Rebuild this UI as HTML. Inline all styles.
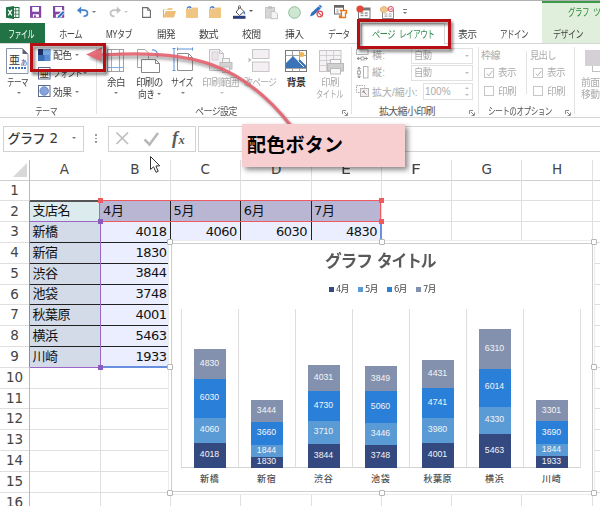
<!DOCTYPE html>
<html lang="ja">
<head>
<meta charset="utf-8">
<title>配色ボタン</title>
<style>
html,body{margin:0;padding:0;}
body{width:600px;height:506px;overflow:hidden;background:#fff;position:relative;font-family:"Liberation Sans","Noto Sans CJK JP",sans-serif;color:#444;}
.a{position:absolute;white-space:nowrap;}
.vl{position:absolute;width:1px;background:#dfdfdf;}
.hl{position:absolute;height:1px;background:#dfdfdf;}
.sep{position:absolute;width:1px;background:#e3e3e3;top:47px;height:67px;}
.hd{position:absolute;width:6px;height:6px;border:1px solid #b5b5b5;background:#fff;box-sizing:border-box;border-radius:1px;}
.cb{position:absolute;width:10px;height:10px;border:1px solid #c6c6c6;background:#fff;box-sizing:border-box;}
.dd{position:absolute;box-sizing:border-box;border:1px solid #e1e1e1;background:#fff;}
.ar{position:absolute;width:0;height:0;border-left:2.2px solid transparent;border-right:2.2px solid transparent;border-top:2.6px solid #777;}
svg{position:absolute;overflow:visible;}
</style>
</head>
<body>
<div class="a" style="left:542px;top:0px;width:58px;height:44px;background:#e0efdc;"></div><div class="a" style="left:542px;top:0px;width:58px;height:3px;background:#3c9a46;"></div><div class="a" style="left:567.5px;top:6.0px;font-size:10px;line-height:13px;color:#2d8a3a;letter-spacing:-0.70px;transform:scaleX(0.752);transform-origin:0 0;">グラフ</div><div class="a" style="left:593.0px;top:6.0px;font-size:10px;line-height:13px;color:#2d8a3a;letter-spacing:-0.70px;transform:scaleX(0.804);transform-origin:0 0;">ツール</div><div class="a" style="left:0px;top:0px;width:600px;height:1px;background:#b0b0b0;"></div><svg style="left:5.5px;top:5.5px" width="14" height="13" viewBox="0 0 14 13"><rect x="6" y="1.5" width="7" height="10" fill="#fff" stroke="#1f7244" stroke-width="1"/><path d="M6 4.8H13M6 8.2H13M9.7 1.5V11.5" stroke="#1f7244" stroke-width=".8"/><path d="M0 1.3L8 0V13L0 11.7Z" fill="#1f7244"/><path d="M2.2 3.8L5.8 9.4M5.8 3.8L2.2 9.4" stroke="#fff" stroke-width="1.3"/></svg><svg style="left:30px;top:6px" width="11.2" height="11.8" viewBox="0 0 11.2 11.8"><rect x="0" y="0" width="11.2" height="11.8" fill="#8246a8"/><rect x="2.2" y="1" width="6.8" height="4.7" fill="#fff"/><rect x="2.9" y="8.3" width="6" height="2.9" fill="#fff"/><rect x="4" y="9.3" width="1.9" height="1.9" fill="#8246a8"/></svg><svg style="left:53px;top:6px" width="12" height="12.5" viewBox="0 0 12 12.5"><rect x="0" y="0" width="11.2" height="11.8" fill="#8246a8"/><rect x="2.2" y="1" width="6.8" height="4.7" fill="#fff"/><rect x="2.9" y="8.3" width="6" height="2.9" fill="#fff"/><path d="M3.2 13L4.2 9.4L9.8 3.8L12.4 6.4L6.8 12Z" fill="#fff"/><path d="M4.2 12.3L5 10L10 5L11.5 6.5L6.5 11.5Z" fill="#2f6fbf"/></svg><svg style="left:76.5px;top:6px" width="12" height="11" viewBox="0 0 12 11"><path d="M1 4.2H6.5C9.5 4.2 10.5 6 10.5 7.3C10.5 9 9 10.3 6.5 10.3" fill="none" stroke="#4683cf" stroke-width="1.7"/><path d="M0 4.2L4.2 .5V7.9Z" fill="#4683cf"/></svg><div class="ar" style="left:92.3px;top:10.7px;border-top-color:#777;"></div><svg style="left:109px;top:6px" width="12" height="11" viewBox="0 0 12 11"><path d="M11 4.2H5.5C2.5 4.2 1.5 6 1.5 7.3C1.5 9 3 10.3 5.5 10.3" fill="none" stroke="#c2c2c2" stroke-width="1.8"/><path d="M12 4.2L7.8 .5V7.9Z" fill="#c2c2c2"/></svg><div class="ar" style="left:123.8px;top:10.7px;border-top-color:#c8c8c8;"></div><svg style="left:141.5px;top:6.5px" width="9" height="11" viewBox="0 0 9 11"><path d="M.6 .6H5.6L8.4 3.4V10.4H.6Z" fill="#fff" stroke="#6e6e6e" stroke-width="1.1"/><path d="M5.6 .6V3.4H8.4" fill="none" stroke="#6e6e6e" stroke-width=".9"/></svg><svg style="left:162.5px;top:6.5px" width="13" height="11" viewBox="0 0 13 11"><path d="M.5 10.5V2.5H4L5 1H9.5V3H.5" fill="#f1cd94"/><path d="M.5 10.5L2.5 4H13L11 10.5Z" fill="#edbf78"/><path d="M.5 10.5V2.5" stroke="#e3ad5a" stroke-width="1"/></svg><svg style="left:186px;top:5.5px" width="12" height="12" viewBox="0 0 12 12"><path d="M0 12V3H5L6 1.5H12V12Z" fill="#efc583"/><path d="M1 2.5C2 .5 3.5 .5 4.5 1.2" fill="none" stroke="#3a6fc0" stroke-width="1.2"/><path d="M3.5 0L5.8 1.4L3.6 2.8Z" fill="#3a6fc0"/></svg><svg style="left:209px;top:5.5px" width="12" height="12" viewBox="0 0 12 12"><path d="M0 12V3H5L6 1.5H12V12Z" fill="#efc583"/><path d="M1 2.5C2 .5 3.5 .5 4.5 1.2" fill="none" stroke="#3a6fc0" stroke-width="1.2"/><path d="M3.5 0L5.8 1.4L3.6 2.8Z" fill="#3a6fc0"/></svg><svg style="left:232.5px;top:4.5px" width="13" height="14" viewBox="0 0 13 14"><path d="M3 7L7 2.5L11 6.5L6.5 10.5Z" fill="#fff" stroke="#555" stroke-width="1"/><path d="M5.5 4V1.5C5.5 .5 7.5 .5 7.5 1.5V3" fill="none" stroke="#555" stroke-width=".9"/><path d="M11 6C12.5 7.5 12.5 9 11.5 9.5C10.5 9 10.3 7.5 11 6Z" fill="#3a7bd0"/><rect x="0" y="10.8" width="12.5" height="3" fill="#2b3f7e"/></svg><div class="ar" style="left:248.8px;top:10.2px;border-top-color:#555;"></div><svg style="left:265px;top:5.5px" width="13" height="13" viewBox="0 0 13 13"><rect x=".5" y="1.5" width="9" height="10.5" fill="#d6d6d6" stroke="#c6c6c6"/><rect x="3" y=".3" width="4" height="2.4" fill="#bdbdbd"/><path d="M6 5.5H10L12.5 8V12.7H6Z" fill="#f4f4f4" stroke="#bdbdbd" stroke-width=".9"/></svg><svg style="left:287.5px;top:5.5px" width="13" height="13" viewBox="0 0 13 13"><circle cx="6.5" cy="6.5" r="5.8" fill="#cfe6d2" stroke="#8cbf98" stroke-width="1"/></svg><svg style="left:309px;top:5px" width="15" height="13" viewBox="0 0 15 13"><path d="M1 11.5L2.2 8L9.5 1.2L11.8 3.4L4.5 10.3Z" fill="#2f6fc0"/><path d="M9.8 .8L11 -.2L13 1.8L12 2.9Z" fill="#2f6fc0"/><circle cx="10.8" cy="9" r="2.8" fill="#fff" stroke="#e0474c" stroke-width="1.2"/><path d="M8.9 7.2L12.7 10.8" stroke="#e0474c" stroke-width="1.1"/></svg><svg style="left:333.5px;top:4.5px" width="14" height="14" viewBox="0 0 14 14"><rect x=".5" y=".5" width="9" height="8.5" fill="#fff" stroke="#666" stroke-width="1"/><rect x=".5" y=".5" width="9" height="2.2" fill="#666"/><path d="M2.5 5H4.5M2.5 7H4.5" stroke="#888" stroke-width="1"/><path d="M6.5 5.5H12.5V8H11.5V12.5H5.5V11H7.5V7.5Z" fill="#fff" stroke="#e8761c" stroke-width="1.3"/></svg><svg style="left:356px;top:4.5px" width="15" height="14" viewBox="0 0 15 14"><rect x="2.5" y="3" width="11.5" height="10.5" fill="#fff" stroke="#777" stroke-width="1"/><rect x="2.5" y="3" width="11.5" height="2.4" fill="#777"/><path d="M4.5 8H12M4.5 10.5H12" stroke="#999" stroke-width="1.3" stroke-dasharray="3 1.2"/><circle cx="4" cy="4" r="3.6" fill="#e04838"/></svg><svg style="left:379.5px;top:4.5px" width="15" height="14" viewBox="0 0 15 14"><rect x="2.5" y="4" width="11" height="9.5" fill="#fff" stroke="#888" stroke-width="1"/><path d="M4.5 9H12M4.5 11.2H12" stroke="#aaa" stroke-width="1.2" stroke-dasharray="3 1.2"/><path d="M.5 3L4 1L7.5 3V6L4 8L.5 6Z" fill="#edc58d" stroke="#d9a45e" stroke-width=".6"/><circle cx="10.8" cy="4" r="2.6" fill="#fbe4e6" stroke="#e0536a" stroke-width="1"/><path d="M9.7 4L10.6 5L12 3" stroke="#e0536a" stroke-width=".8" fill="none"/></svg><div class="a" style="left:402.8px;top:9.3px;width:4.6px;height:1px;background:#777;"></div><div class="ar" style="left:402.8px;top:11.7px;border-top-color:#777;"></div>
<div class="a" style="left:0px;top:22.5px;width:45px;height:20.5px;background:#217346;"></div><div class="a" style="left:7.5px;top:26.6px;font-size:10.5px;line-height:14px;color:#fff;letter-spacing:-0.74px;transform:scaleX(0.666);transform-origin:0 0;">ファイル</div><div class="a" style="left:59.0px;top:26.6px;font-size:10.5px;line-height:14px;color:#444;letter-spacing:-0.74px;transform:scaleX(0.791);transform-origin:0 0;">ホーム</div><div class="a" style="left:106.0px;top:26.6px;font-size:10.5px;line-height:14px;color:#444;letter-spacing:-0.74px;transform:scaleX(0.767);transform-origin:0 0;">MYタブ</div><div class="a" style="left:157.0px;top:26.6px;font-size:10.5px;line-height:14px;color:#444;letter-spacing:-0.74px;transform:scaleX(0.913);transform-origin:0 0;">開発</div><div class="a" style="left:199.0px;top:26.6px;font-size:10.5px;line-height:14px;color:#444;letter-spacing:-0.74px;transform:scaleX(0.962);transform-origin:0 0;">数式</div><div class="a" style="left:241.5px;top:26.6px;font-size:10.5px;line-height:14px;color:#444;letter-spacing:-0.74px;transform:scaleX(0.938);transform-origin:0 0;">校閲</div><div class="a" style="left:285.0px;top:26.6px;font-size:10.5px;line-height:14px;color:#444;letter-spacing:-0.74px;transform:scaleX(0.938);transform-origin:0 0;">挿入</div><div class="a" style="left:327.5px;top:26.6px;font-size:10.5px;line-height:14px;color:#444;letter-spacing:-0.74px;transform:scaleX(0.733);transform-origin:0 0;">データ</div><div class="hl" style="left:0;top:43px;width:600px;background:#d6d6d6;"></div><div class="a" style="left:361px;top:23px;width:84px;height:21px;background:#fff;border:1px solid #d6d6d6;border-bottom:none;box-sizing:border-box;"></div><div class="a" style="left:371.6px;top:26.6px;font-size:10.5px;line-height:14px;color:#2d8a4e;letter-spacing:-0.74px;transform:scaleX(0.785);transform-origin:0 0;">ページ</div><div class="a" style="left:399.0px;top:26.6px;font-size:10.5px;line-height:14px;color:#2d8a4e;letter-spacing:-0.74px;transform:scaleX(0.726);transform-origin:0 0;">レイアウト</div><div class="a" style="left:457.5px;top:26.6px;font-size:10.5px;line-height:14px;color:#444;letter-spacing:-0.74px;transform:scaleX(0.938);transform-origin:0 0;">表示</div><div class="a" style="left:500.0px;top:26.6px;font-size:10.5px;line-height:14px;color:#444;letter-spacing:-0.74px;transform:scaleX(0.716);transform-origin:0 0;">アドイン</div><div class="a" style="left:552.5px;top:26.6px;font-size:10.5px;line-height:14px;color:#444;letter-spacing:-0.74px;transform:scaleX(0.766);transform-origin:0 0;">デザイン</div>
<svg style="left:6.2px;top:47.5px" width="22.5" height="26" viewBox="0 0 22.5 26"><path d="M.5 .5H16.5L22 6V25.5H.5Z" fill="#fff" stroke="#8a94a8" stroke-width="1"/><path d="M16.5 .5V6H22Z" fill="#5a6378"/><text x="3" y="16.3" font-size="11" font-family="Liberation Sans,Noto Sans CJK JP,sans-serif" fill="#333">亜</text><text x="13.6" y="16.8" font-size="8.5" font-family="Liberation Sans,Noto Sans CJK JP,sans-serif" fill="#3a62b0">ぁ</text><path d="M3 20H21" stroke="#3f74c4" stroke-width="1.8" stroke-dasharray="2 1"/></svg><div class="a" style="left:7.0px;top:76.3px;font-size:10px;line-height:13px;color:#444;letter-spacing:-0.70px;transform:scaleX(0.752);transform-origin:0 0;">テーマ</div><div class="ar" style="left:17.3px;top:91.7px;border-top-color:#808080;"></div><svg style="left:37.5px;top:48.5px" width="12.5" height="12" viewBox="0 0 12.5 12"><rect x="0" y="0" width="12.5" height="12" fill="#5b8fd3"/><rect x="5" y="0" width="7.5" height="6" fill="#74a6df"/><rect x="0" y="6" width="6.5" height="6" fill="#3a6db8"/><rect x="0" y="0" width="5" height="6" fill="#1f2f63"/></svg><div class="a" style="left:52.5px;top:48.5px;font-size:10px;line-height:13px;color:#444;letter-spacing:-0.70px;transform:scaleX(0.984);transform-origin:0 0;">配色</div><div class="ar" style="left:74.8px;top:53.7px;border-top-color:#808080;"></div><svg style="left:37.5px;top:66.5px" width="12.5" height="12.5" viewBox="0 0 12.5 12.5"><rect x=".5" y=".5" width="11.5" height="11.5" fill="#fff" stroke="#5c6b8a" stroke-width="1"/><text x="1.6" y="10.3" font-size="9.5" font-family="Liberation Sans,Noto Sans CJK JP,sans-serif" fill="#333">亜</text></svg><div class="a" style="left:52.5px;top:67.2px;font-size:10px;line-height:13px;color:#444;letter-spacing:-0.70px;transform:scaleX(0.778);transform-origin:0 0;">フォント</div><div class="ar" style="left:83.3px;top:72.2px;border-top-color:#808080;"></div><svg style="left:37.5px;top:84.5px" width="12.5" height="12" viewBox="0 0 12.5 12"><rect x=".5" y=".5" width="11.5" height="11" fill="#fff" stroke="#5c6b8a" stroke-width="1"/><circle cx="6.2" cy="6" r="4.3" fill="#86a3dc" stroke="#5f7fc4" stroke-width=".8"/></svg><div class="a" style="left:52.5px;top:85.5px;font-size:10px;line-height:13px;color:#444;letter-spacing:-0.70px;transform:scaleX(0.984);transform-origin:0 0;">効果</div><div class="ar" style="left:74.8px;top:90.7px;border-top-color:#808080;"></div><div class="a" style="left:35.0px;top:104.5px;font-size:10px;line-height:13px;color:#555;letter-spacing:-0.70px;transform:scaleX(0.787);transform-origin:0 0;">テーマ</div><div class="sep" style="left:95.5px;"></div><svg style="left:106.5px;top:48.5px" width="17" height="23" viewBox="0 0 17 23"><rect x=".5" y=".5" width="16" height="22" fill="#fff" stroke="#a2a2a2" stroke-width="1"/><path d="M4.5 .5V22.5M12.5 .5V22.5M.5 4.5H16.5M.5 18.5H16.5" stroke="#78a5df" stroke-width=".9"/></svg><div class="a" style="left:106.5px;top:75.5px;font-size:10px;line-height:13px;color:#444;letter-spacing:-0.70px;transform:scaleX(0.959);transform-origin:0 0;">余白</div><div class="ar" style="left:114.1px;top:91.7px;border-top-color:#808080;"></div><svg style="left:137px;top:47.5px" width="24" height="25" viewBox="0 0 24 25"><path d="M.5 1.5H8L11.5 5V19.5H.5Z" fill="#fff" stroke="#a5a5a5" stroke-width="1"/><path d="M4.5 11.5H18.5L22.5 15.5V24.5H4.5Z" fill="#fff" stroke="#858585" stroke-width="1"/><path d="M18.5 11.5V15.5H22.5" fill="none" stroke="#858585" stroke-width="1"/><path d="M15 2C18.5 1.5 21 4 20.5 8" fill="none" stroke="#5b92da" stroke-width="1.2"/><path d="M18.3 6.5L20.6 9.5L22.6 6.2Z" fill="#5b92da"/></svg><div class="a" style="left:135.8px;top:75.5px;font-size:10px;line-height:13px;color:#444;letter-spacing:-0.70px;transform:scaleX(0.951);transform-origin:0 0;">印刷の</div><div class="a" style="left:137.5px;top:87.5px;font-size:10px;line-height:13px;color:#444;letter-spacing:-0.70px;transform:scaleX(0.881);transform-origin:0 0;">向き</div><div class="ar" style="left:157.10000000000002px;top:92.7px;border-top-color:#808080;"></div><svg style="left:172px;top:47px" width="22" height="25" viewBox="0 0 22 25"><path d="M5.5 6.5H16.5L20.5 10.5V23.5H5.5Z" fill="#fff" stroke="#8f8f8f" stroke-width="1"/><path d="M16.5 6.5V10.5H20.5" fill="none" stroke="#8f8f8f" stroke-width="1"/><path d="M2 1.5V23.5M.5 1.5H3.5M.5 23.5H3.5M5.5 2H20.5M5.5 .5V3.5M20.5 .5V3.5" stroke="#5b92da" stroke-width="1"/></svg><div class="a" style="left:171.0px;top:75.5px;font-size:10px;line-height:13px;color:#444;letter-spacing:-0.70px;transform:scaleX(0.795);transform-origin:0 0;">サイズ</div><div class="ar" style="left:181.10000000000002px;top:91.7px;border-top-color:#808080;"></div><svg style="left:209px;top:49px" width="24" height="25" viewBox="0 0 24 25"><path d="M.5 .5H10.5L14.5 4.5V21.5H.5Z" fill="#f4eff3" stroke="#c2c2c2" stroke-width="1"/><path d="M10.5 .5V4.5H14.5" fill="none" stroke="#c2c2c2"/><rect x="3" y="3" width="6" height="8" fill="#ebe3ea" stroke="#cfcfcf" stroke-width=".8"/><rect x="13.5" y="9.5" width="7" height="5" fill="#f6f6f6" stroke="#bcbcbc"/><rect x="11" y="13.5" width="12" height="6.5" fill="#d2d2d2" stroke="#bcbcbc"/><rect x="13.5" y="18" width="7" height="5.5" fill="#f6f6f6" stroke="#bcbcbc"/></svg><div class="a" style="left:201.5px;top:75.5px;font-size:10px;line-height:13px;color:#ababab;letter-spacing:-0.70px;transform:scaleX(0.989);transform-origin:0 0;">印刷範囲</div><div class="ar" style="left:220.3px;top:91.7px;border-top-color:#c4c4c4;"></div><svg style="left:247.5px;top:49px" width="22" height="23" viewBox="0 0 22 23"><rect x="4.5" y=".5" width="16.5" height="9" fill="#f4eff3" stroke="#c6c6c6"/><rect x="4.5" y="13" width="16.5" height="9.5" fill="#f4eff3" stroke="#c6c6c6"/><path d="M.5 8.5L3.5 11L.5 13.5Z" fill="#bdbdbd"/></svg><div class="a" style="left:243.5px;top:75.5px;font-size:10px;line-height:13px;color:#ababab;letter-spacing:-0.70px;transform:scaleX(0.875);transform-origin:0 0;">改ページ</div><svg style="left:285px;top:49.5px" width="22" height="22" viewBox="0 0 22 22"><rect x=".5" y=".5" width="21" height="21" fill="#fff" stroke="#777" stroke-width="1"/><path d="M.5 5.5H21.5M7.5 .5V21.5M14.5 .5V21.5M.5 18.5H21.5" stroke="#9a9a9a" stroke-width=".9"/><path d="M1 18V13L8 6L13 11L15 9.5L21 15.5V18Z" fill="#3b73b9"/><path d="M13 11L19 17" stroke="#fff" stroke-width=".9"/><circle cx="16.8" cy="4.6" r="2.5" fill="#f2b450"/></svg><div class="a" style="left:286.5px;top:75.5px;font-size:10px;line-height:13px;color:#333;letter-spacing:-0.50px;font-weight:700;">背景</div><svg style="left:318.5px;top:49.5px" width="26" height="25" viewBox="0 0 26 25"><rect x=".5" y=".5" width="21.5" height="21" fill="#f6f1f5" stroke="#c6c6c6"/><path d="M.5 5.5H22M.5 10.5H22M.5 15.5H22M7.5 .5V21.5M14.5 .5V21.5" stroke="#cdcdcd" stroke-width=".9"/><rect x="11.5" y="9.5" width="10" height="6" fill="#f8f8f8" stroke="#bcbcbc"/><rect x="8.5" y="13.5" width="16" height="7.5" fill="#cfcfcf" stroke="#b8b8b8"/><rect x="11.5" y="18.5" width="10" height="5.5" fill="#f8f8f8" stroke="#bcbcbc"/></svg><div class="a" style="left:320.5px;top:75.5px;font-size:10px;line-height:13px;color:#ababab;letter-spacing:-0.70px;transform:scaleX(0.959);transform-origin:0 0;">印刷</div><div class="a" style="left:316.0px;top:87.5px;font-size:10px;line-height:13px;color:#ababab;letter-spacing:-0.70px;transform:scaleX(0.726);transform-origin:0 0;">タイトル</div><div class="a" style="left:195.0px;top:104.5px;font-size:10px;line-height:13px;color:#555;letter-spacing:-0.70px;transform:scaleX(0.904);transform-origin:0 0;">ページ設定</div><svg style="left:341.5px;top:109.5px" width="6" height="6" viewBox="0 0 6 6"><path d="M.5 4V.5H4" fill="none" stroke="#8a8a8a" stroke-width="1"/><path d="M2 2L5 5M5.5 2.5V5.5H2.5" fill="none" stroke="#8a8a8a" stroke-width="1"/></svg><div class="sep" style="left:350.5px;"></div><svg style="left:356px;top:48.5px" width="13" height="12" viewBox="0 0 13 12"><rect x=".5" y=".5" width="11.5" height="5" fill="#fff" stroke="#b5b5b5" stroke-dasharray="0"/><path d="M1 9.5H11.5M1 9.5L3 8M1 9.5L3 11M11.5 9.5L9.5 8M11.5 9.5L9.5 11" stroke="#8a8a8a" stroke-width=".9" fill="none"/><rect x="5" y="8" width="3" height="3" fill="#fff" stroke="#9a9a9a" stroke-width=".8"/></svg><svg style="left:356px;top:66px" width="13" height="13" viewBox="0 0 13 13"><rect x="7.5" y=".5" width="4.5" height="11.5" fill="#fff" stroke="#b5b5b5"/><path d="M3 1V12M3 1L1.5 3M3 1L4.5 3M3 12L1.5 10M3 12L4.5 10" stroke="#8a8a8a" stroke-width=".9" fill="none"/><rect x="1.5" y="5" width="3" height="3" fill="#fff" stroke="#9a9a9a" stroke-width=".8"/></svg><svg style="left:356px;top:84.5px" width="13" height="12" viewBox="0 0 13 12"><rect x=".5" y=".5" width="8" height="7" fill="#fff" stroke="#a8a8a8" stroke-dasharray="1.5 1"/><rect x="4.5" y="3.5" width="8" height="8" fill="#f4eff3" stroke="#b5b5b5"/><path d="M7 6L10.5 9.5M7 6H9M7 6V8" stroke="#8a8a8a" stroke-width=".9" fill="none"/></svg><div class="a" style="left:372.0px;top:48.8px;font-size:10px;line-height:13px;color:#ababab;letter-spacing:0.22px;">横:</div><div class="a" style="left:372.0px;top:66.3px;font-size:10px;line-height:13px;color:#ababab;letter-spacing:0.22px;">縦:</div><div class="a" style="left:372.0px;top:85.5px;font-size:10px;line-height:13px;color:#ababab;">拡大/縮小:</div><div class="dd" style="left:411px;top:47.5px;width:62px;height:16.5px;"></div><div class="dd" style="left:411px;top:64.5px;width:62px;height:16.5px;"></div><div class="dd" style="left:422.5px;top:82.5px;width:50.5px;height:17.5px;"></div><div class="a" style="left:414.0px;top:48.8px;font-size:10px;line-height:13px;color:#ababab;letter-spacing:-0.70px;transform:scaleX(0.933);transform-origin:0 0;">自動</div><div class="a" style="left:414.0px;top:66.3px;font-size:10px;line-height:13px;color:#ababab;letter-spacing:-0.70px;transform:scaleX(0.933);transform-origin:0 0;">自動</div><div class="a" style="left:425.0px;top:85.0px;font-size:10px;line-height:13px;color:#ababab;">100%</div><div class="ar" style="left:464.8px;top:54.7px;border-top-color:#bdbdbd;"></div><div class="ar" style="left:464.8px;top:72.2px;border-top-color:#bdbdbd;"></div><div class="ar" style="left:464.8px;top:87px;border-top:none;border-bottom:2.6px solid #bdbdbd;"></div><div class="ar" style="left:465.1px;top:94.2px;border-top-color:#bdbdbd;"></div><div class="a" style="left:379.0px;top:104.5px;font-size:10px;line-height:13px;color:#555;letter-spacing:-0.70px;">拡大縮小印刷</div><svg style="left:468.5px;top:109.5px" width="6" height="6" viewBox="0 0 6 6"><path d="M.5 4V.5H4" fill="none" stroke="#8a8a8a" stroke-width="1"/><path d="M2 2L5 5M5.5 2.5V5.5H2.5" fill="none" stroke="#8a8a8a" stroke-width="1"/></svg><div class="sep" style="left:477.5px;"></div><div class="a" style="left:481.0px;top:48.8px;font-size:10px;line-height:13px;color:#ababab;letter-spacing:-0.50px;">枠線</div><div class="a" style="left:530.0px;top:48.8px;font-size:10px;line-height:13px;color:#ababab;letter-spacing:-0.70px;transform:scaleX(0.927);transform-origin:0 0;">見出し</div><div class="cb" style="left:483.5px;top:67.5px;"><svg style="left:1px;top:1px" width="7" height="7" viewBox="0 0 7 7"><path d="M.8 3.6L2.8 5.8L6.3 .9" fill="none" stroke="#b5b5b5" stroke-width="1"/></svg></div><div class="cb" style="left:483.5px;top:86px;"></div><div class="cb" style="left:532.5px;top:67.5px;"><svg style="left:1px;top:1px" width="7" height="7" viewBox="0 0 7 7"><path d="M.8 3.6L2.8 5.8L6.3 .9" fill="none" stroke="#b5b5b5" stroke-width="1"/></svg></div><div class="cb" style="left:532.5px;top:86px;"></div><div class="a" style="left:498.0px;top:66.0px;font-size:10px;line-height:13px;color:#ababab;letter-spacing:-0.70px;transform:scaleX(0.959);transform-origin:0 0;">表示</div><div class="a" style="left:498.0px;top:84.5px;font-size:10px;line-height:13px;color:#ababab;letter-spacing:-0.70px;transform:scaleX(0.959);transform-origin:0 0;">印刷</div><div class="a" style="left:547.0px;top:66.0px;font-size:10px;line-height:13px;color:#ababab;letter-spacing:-0.70px;transform:scaleX(0.959);transform-origin:0 0;">表示</div><div class="a" style="left:547.0px;top:84.5px;font-size:10px;line-height:13px;color:#ababab;letter-spacing:-0.70px;transform:scaleX(0.959);transform-origin:0 0;">印刷</div><div class="a" style="left:525.5px;top:51px;width:1px;height:43px;background:#e3e3e3;"></div><div class="a" style="left:487.5px;top:104.5px;font-size:10px;line-height:13px;color:#555;letter-spacing:-0.70px;transform:scaleX(0.764);transform-origin:0 0;">シートのオプション</div><svg style="left:565px;top:109.5px" width="6" height="6" viewBox="0 0 6 6"><path d="M.5 4V.5H4" fill="none" stroke="#8a8a8a" stroke-width="1"/><path d="M2 2L5 5M5.5 2.5V5.5H2.5" fill="none" stroke="#8a8a8a" stroke-width="1"/></svg><div class="sep" style="left:574px;"></div><div class="a" style="left:585px;top:49.5px;width:20px;height:16.5px;background:#d5d0d6;"></div><div class="a" style="left:592px;top:66px;width:1px;height:5px;background:#c0c0c0;"></div><div class="a" style="left:592px;top:70.5px;width:8px;height:1px;background:#c0c0c0;"></div><div class="a" style="left:581.0px;top:75.5px;font-size:10px;line-height:13px;color:#ababab;letter-spacing:-0.70px;transform:scaleX(0.984);transform-origin:0 0;">前面</div><div class="a" style="left:581.0px;top:87.5px;font-size:10px;line-height:13px;color:#ababab;letter-spacing:-0.70px;transform:scaleX(0.984);transform-origin:0 0;">移動</div>
<div class="hl" style="left:0;top:117px;width:600px;background:#d6d6d6;"></div><div class="a" style="left:2.5px;top:126px;width:81px;height:26px;background:#fff;border:1px solid #d2d2d2;box-sizing:border-box;"></div><div class="a" style="left:7.5px;top:129.5px;font-size:13px;line-height:17px;color:#3a3a3a;letter-spacing:-0.51px;font-weight:500;">グラフ</div><div class="a" style="left:49.5px;top:128.7px;font-size:13.5px;line-height:18px;color:#3a3a3a;font-family:'DejaVu Sans','Liberation Sans','Noto Sans CJK JP',sans-serif;">2</div><div class="ar" style="left:72.3px;top:137.2px;border-top-color:#777;"></div><div class="a" style="left:95px;top:134px;width:1.5px;height:1.5px;background:#9a9a9a;"></div><div class="a" style="left:95px;top:137.5px;width:1.5px;height:1.5px;background:#9a9a9a;"></div><div class="a" style="left:95px;top:141px;width:1.5px;height:1.5px;background:#9a9a9a;"></div><div class="a" style="left:107.5px;top:126px;width:88px;height:26px;background:#fff;border:1px solid #d2d2d2;box-sizing:border-box;"></div><div class="a" style="left:198px;top:126px;width:410px;height:26px;background:#fff;border:1px solid #d2d2d2;box-sizing:border-box;"></div><svg style="left:107px;top:126px" width="88" height="26" viewBox="0 0 88 26"><path d="M9.5 6.5 L21 18 M21 6.5 L9.5 18" stroke="#bdbdbd" stroke-width="1.7" fill="none"/><path d="M37.5 13.5 L42.5 18.5 L51 7" stroke="#b9b9b9" stroke-width="2.6" fill="none"/><text x="65" y="18" font-family="Liberation Serif,serif" font-style="italic" font-weight="bold" font-size="18" fill="#5a5a5a">f</text><text x="71.5" y="18" font-family="Liberation Serif,serif" font-style="italic" font-weight="bold" font-size="12.5" fill="#5a5a5a">x</text></svg>
<div class="hl" style="left:0;top:179.5px;width:600px;background:#cfcfcf;"></div><div class="hl" style="left:0;top:200.3px;width:600px;"></div><div class="hl" style="left:0;top:221.1px;width:600px;"></div><div class="hl" style="left:0;top:241.9px;width:600px;"></div><div class="hl" style="left:0;top:262.7px;width:600px;"></div><div class="hl" style="left:0;top:283.5px;width:600px;"></div><div class="hl" style="left:0;top:304.3px;width:600px;"></div><div class="hl" style="left:0;top:325.1px;width:600px;"></div><div class="hl" style="left:0;top:345.9px;width:600px;"></div><div class="hl" style="left:0;top:366.7px;width:600px;"></div><div class="hl" style="left:0;top:387.5px;width:600px;"></div><div class="hl" style="left:0;top:408.3px;width:600px;"></div><div class="hl" style="left:0;top:429.1px;width:600px;"></div><div class="hl" style="left:0;top:449.9px;width:600px;"></div><div class="hl" style="left:0;top:470.7px;width:600px;"></div><div class="hl" style="left:0;top:491.5px;width:600px;"></div><div class="hl" style="left:0;top:512.3px;width:600px;"></div><div class="vl" style="left:29.0px;top:160px;height:346px;background:#b9b9b9;"></div><div class="vl" style="left:99.5px;top:160px;height:346px;"></div><div class="vl" style="left:170.0px;top:160px;height:346px;"></div><div class="vl" style="left:240.2px;top:160px;height:346px;"></div><div class="vl" style="left:310.5px;top:160px;height:346px;"></div><div class="vl" style="left:380.5px;top:160px;height:346px;"></div><div class="vl" style="left:451.0px;top:160px;height:346px;"></div><div class="vl" style="left:521.2px;top:160px;height:346px;"></div><div class="vl" style="left:591.5px;top:160px;height:346px;"></div><svg style="left:0;top:158px" width="30" height="22"><path d="M27 5 L27 19 L13 19 Z" fill="#d8d8d8"/></svg><div class="a" style="left:59.8px;top:159.5px;font-size:13.5px;line-height:18px;color:#444;font-family:'DejaVu Sans','Liberation Sans','Noto Sans CJK JP',sans-serif;">A</div><div class="a" style="left:130.2px;top:159.5px;font-size:13.5px;line-height:18px;color:#444;font-family:'DejaVu Sans','Liberation Sans','Noto Sans CJK JP',sans-serif;">B</div><div class="a" style="left:200.6px;top:159.5px;font-size:13.5px;line-height:18px;color:#444;font-family:'DejaVu Sans','Liberation Sans','Noto Sans CJK JP',sans-serif;">C</div><div class="a" style="left:270.9px;top:159.5px;font-size:13.5px;line-height:18px;color:#444;font-family:'DejaVu Sans','Liberation Sans','Noto Sans CJK JP',sans-serif;">D</div><div class="a" style="left:341.0px;top:159.5px;font-size:13.5px;line-height:18px;color:#444;transform:scaleX(1.172);transform-origin:0 0;font-family:'DejaVu Sans','Liberation Sans','Noto Sans CJK JP',sans-serif;">E</div><div class="a" style="left:411.2px;top:159.5px;font-size:13.5px;line-height:18px;color:#444;transform:scaleX(1.288);transform-origin:0 0;font-family:'DejaVu Sans','Liberation Sans','Noto Sans CJK JP',sans-serif;">F</div><div class="a" style="left:481.6px;top:159.5px;font-size:13.5px;line-height:18px;color:#444;font-family:'DejaVu Sans','Liberation Sans','Noto Sans CJK JP',sans-serif;">G</div><div class="a" style="left:551.9px;top:159.5px;font-size:13.5px;line-height:18px;color:#444;font-family:'DejaVu Sans','Liberation Sans','Noto Sans CJK JP',sans-serif;">H</div><div class="a" style="left:10.2px;top:180.7px;font-size:13.5px;line-height:18px;color:#444;font-family:'DejaVu Sans','Liberation Sans','Noto Sans CJK JP',sans-serif;">1</div><div class="a" style="left:10.2px;top:201.5px;font-size:13.5px;line-height:18px;color:#444;font-family:'DejaVu Sans','Liberation Sans','Noto Sans CJK JP',sans-serif;">2</div><div class="a" style="left:10.2px;top:222.2px;font-size:13.5px;line-height:18px;color:#444;font-family:'DejaVu Sans','Liberation Sans','Noto Sans CJK JP',sans-serif;">3</div><div class="a" style="left:10.2px;top:243.1px;font-size:13.5px;line-height:18px;color:#444;font-family:'DejaVu Sans','Liberation Sans','Noto Sans CJK JP',sans-serif;">4</div><div class="a" style="left:10.2px;top:263.8px;font-size:13.5px;line-height:18px;color:#444;font-family:'DejaVu Sans','Liberation Sans','Noto Sans CJK JP',sans-serif;">5</div><div class="a" style="left:10.2px;top:284.6px;font-size:13.5px;line-height:18px;color:#444;font-family:'DejaVu Sans','Liberation Sans','Noto Sans CJK JP',sans-serif;">6</div><div class="a" style="left:10.2px;top:305.4px;font-size:13.5px;line-height:18px;color:#444;font-family:'DejaVu Sans','Liberation Sans','Noto Sans CJK JP',sans-serif;">7</div><div class="a" style="left:10.2px;top:326.2px;font-size:13.5px;line-height:18px;color:#444;font-family:'DejaVu Sans','Liberation Sans','Noto Sans CJK JP',sans-serif;">8</div><div class="a" style="left:10.2px;top:347.0px;font-size:13.5px;line-height:18px;color:#444;font-family:'DejaVu Sans','Liberation Sans','Noto Sans CJK JP',sans-serif;">9</div><div class="a" style="left:6.0px;top:367.9px;font-size:13.5px;line-height:18px;color:#444;letter-spacing:-0.19px;font-family:'DejaVu Sans','Liberation Sans','Noto Sans CJK JP',sans-serif;">10</div><div class="a" style="left:6.0px;top:388.6px;font-size:13.5px;line-height:18px;color:#444;letter-spacing:-0.19px;font-family:'DejaVu Sans','Liberation Sans','Noto Sans CJK JP',sans-serif;">11</div><div class="a" style="left:6.0px;top:409.4px;font-size:13.5px;line-height:18px;color:#444;letter-spacing:-0.19px;font-family:'DejaVu Sans','Liberation Sans','Noto Sans CJK JP',sans-serif;">12</div><div class="a" style="left:6.0px;top:430.2px;font-size:13.5px;line-height:18px;color:#444;letter-spacing:-0.19px;font-family:'DejaVu Sans','Liberation Sans','Noto Sans CJK JP',sans-serif;">13</div><div class="a" style="left:6.0px;top:451.1px;font-size:13.5px;line-height:18px;color:#444;letter-spacing:-0.19px;font-family:'DejaVu Sans','Liberation Sans','Noto Sans CJK JP',sans-serif;">14</div><div class="a" style="left:6.0px;top:471.8px;font-size:13.5px;line-height:18px;color:#444;letter-spacing:-0.19px;font-family:'DejaVu Sans','Liberation Sans','Noto Sans CJK JP',sans-serif;">15</div><div class="a" style="left:6.0px;top:492.6px;font-size:13.5px;line-height:18px;color:#444;letter-spacing:-0.19px;font-family:'DejaVu Sans','Liberation Sans','Noto Sans CJK JP',sans-serif;">16</div><div class="a" style="left:29.5px;top:200.8px;width:70.5px;height:20.8px;background:#dcebee;"></div><div class="a" style="left:100.0px;top:200.8px;width:281.0px;height:20.8px;background:#b9b6d3;"></div><div class="a" style="left:29.5px;top:221.6px;width:70.5px;height:145.6px;background:#d3dbe8;"></div><div class="a" style="left:100.0px;top:221.6px;width:281.0px;height:20.8px;background:#eaeeff;"></div><div class="a" style="left:100.0px;top:242.4px;width:70.5px;height:124.8px;background:#eaeeff;"></div><div class="a" style="left:29.5px;top:200.1px;width:70.5px;height:1.5px;background:#555;"></div><div class="a" style="left:29.5px;top:241.9px;width:141.0px;height:1px;background:#222;"></div><div class="a" style="left:29.5px;top:262.7px;width:141.0px;height:1px;background:#222;"></div><div class="a" style="left:29.5px;top:283.5px;width:141.0px;height:1px;background:#222;"></div><div class="a" style="left:29.5px;top:304.3px;width:141.0px;height:1px;background:#222;"></div><div class="a" style="left:29.5px;top:325.1px;width:141.0px;height:1px;background:#222;"></div><div class="a" style="left:29.5px;top:345.9px;width:141.0px;height:1px;background:#222;"></div><div class="a" style="left:170.0px;top:200.8px;width:1px;height:41.6px;background:#222;"></div><div class="a" style="left:240.2px;top:200.8px;width:1px;height:41.6px;background:#222;"></div><div class="a" style="left:310.5px;top:200.8px;width:1px;height:41.6px;background:#222;"></div><div class="a" style="left:29.0px;top:200.8px;width:1px;height:166.4px;background:#8f8f8f;"></div><div class="a" style="left:32.5px;top:202.3px;font-size:13px;line-height:17px;color:#111;letter-spacing:-0.46px;">支店名</div><div class="a" style="left:32.5px;top:223.1px;font-size:13px;line-height:17px;color:#111;letter-spacing:-0.62px;">新橋</div><div class="a" style="left:32.5px;top:243.9px;font-size:13px;line-height:17px;color:#111;letter-spacing:-0.62px;">新宿</div><div class="a" style="left:32.5px;top:264.6px;font-size:13px;line-height:17px;color:#111;letter-spacing:-0.62px;">渋谷</div><div class="a" style="left:32.5px;top:285.4px;font-size:13px;line-height:17px;color:#111;letter-spacing:-0.62px;">池袋</div><div class="a" style="left:32.5px;top:306.2px;font-size:13px;line-height:17px;color:#111;letter-spacing:-0.46px;">秋葉原</div><div class="a" style="left:32.5px;top:327.1px;font-size:13px;line-height:17px;color:#111;letter-spacing:-0.62px;">横浜</div><div class="a" style="left:32.5px;top:347.8px;font-size:13px;line-height:17px;color:#111;letter-spacing:-0.62px;">川崎</div><div class="a" style="left:103.0px;top:202.3px;font-size:13px;line-height:17px;color:#111;letter-spacing:-0.28px;font-family:'DejaVu Sans','Liberation Sans','Noto Sans CJK JP',sans-serif;">4月</div><div class="a" style="left:173.5px;top:202.3px;font-size:13px;line-height:17px;color:#111;letter-spacing:-0.28px;font-family:'DejaVu Sans','Liberation Sans','Noto Sans CJK JP',sans-serif;">5月</div><div class="a" style="left:243.7px;top:202.3px;font-size:13px;line-height:17px;color:#111;letter-spacing:-0.28px;font-family:'DejaVu Sans','Liberation Sans','Noto Sans CJK JP',sans-serif;">6月</div><div class="a" style="left:314.0px;top:202.3px;font-size:13px;line-height:17px;color:#111;letter-spacing:-0.28px;font-family:'DejaVu Sans','Liberation Sans','Noto Sans CJK JP',sans-serif;">7月</div><div class="a" style="left:135.5px;top:222.7px;font-size:13px;line-height:17px;color:#111;letter-spacing:-0.53px;font-family:'DejaVu Sans','Liberation Sans','Noto Sans CJK JP',sans-serif;">4018</div><div class="a" style="left:135.5px;top:243.5px;font-size:13px;line-height:17px;color:#111;letter-spacing:-0.53px;font-family:'DejaVu Sans','Liberation Sans','Noto Sans CJK JP',sans-serif;">1830</div><div class="a" style="left:135.5px;top:264.3px;font-size:13px;line-height:17px;color:#111;letter-spacing:-0.53px;font-family:'DejaVu Sans','Liberation Sans','Noto Sans CJK JP',sans-serif;">3844</div><div class="a" style="left:135.5px;top:285.1px;font-size:13px;line-height:17px;color:#111;letter-spacing:-0.53px;font-family:'DejaVu Sans','Liberation Sans','Noto Sans CJK JP',sans-serif;">3748</div><div class="a" style="left:135.5px;top:305.9px;font-size:13px;line-height:17px;color:#111;letter-spacing:-0.53px;font-family:'DejaVu Sans','Liberation Sans','Noto Sans CJK JP',sans-serif;">4001</div><div class="a" style="left:135.5px;top:326.7px;font-size:13px;line-height:17px;color:#111;letter-spacing:-0.53px;font-family:'DejaVu Sans','Liberation Sans','Noto Sans CJK JP',sans-serif;">5463</div><div class="a" style="left:135.5px;top:347.5px;font-size:13px;line-height:17px;color:#111;letter-spacing:-0.53px;font-family:'DejaVu Sans','Liberation Sans','Noto Sans CJK JP',sans-serif;">1933</div><div class="a" style="left:205.7px;top:222.7px;font-size:13px;line-height:17px;color:#111;letter-spacing:-0.53px;font-family:'DejaVu Sans','Liberation Sans','Noto Sans CJK JP',sans-serif;">4060</div><div class="a" style="left:276.0px;top:222.7px;font-size:13px;line-height:17px;color:#111;letter-spacing:-0.53px;font-family:'DejaVu Sans','Liberation Sans','Noto Sans CJK JP',sans-serif;">6030</div><div class="a" style="left:346.0px;top:222.7px;font-size:13px;line-height:17px;color:#111;letter-spacing:-0.53px;font-family:'DejaVu Sans','Liberation Sans','Noto Sans CJK JP',sans-serif;">4830</div><div class="a" style="left:99.0px;top:199.8px;width:282.0px;height:22.3px;background:transparent;border:1.5px solid #ee5a5f;box-sizing:border-box;"></div><div class="a" style="left:29.5px;top:220.6px;width:71.5px;height:147.6px;background:transparent;border:1.5px solid #9a66c8;border-right-width:1.6px;box-sizing:border-box;border-left:none;"></div><div class="a" style="left:101.0px;top:366.2px;width:69.5px;height:1.5px;background:#6a8fe0;"></div><div class="a" style="left:380.0px;top:221.6px;width:1.5px;height:18.8px;background:#6a8fe0;"></div><div class="a" style="left:97.5px;top:198.3px;width:5px;height:5px;background:#ee5a5f;"></div><div class="a" style="left:378.5px;top:198.3px;width:5px;height:5px;background:#ee5a5f;"></div><div class="a" style="left:378.5px;top:219.1px;width:5px;height:5px;background:#ee5a5f;"></div><div class="a" style="left:97.5px;top:219.1px;width:5px;height:5px;background:#8a5cc0;"></div><div class="a" style="left:97.5px;top:364.7px;width:5px;height:5px;background:#8a5cc0;"></div>
<div class="a" style="left:168.3px;top:240.0px;width:427px;height:254.5px;background:#fff;border:1px solid #ececec;box-sizing:border-box;"></div><div class="a" style="left:170.8px;top:242.8px;width:422.4px;height:249.3px;background:#fff;border:1px solid #cdcdcd;box-sizing:border-box;"></div><div class="a" style="left:324.5px;top:251.3px;font-size:17px;line-height:22px;color:#595959;letter-spacing:-1.19px;transform:scaleX(0.987);transform-origin:0 0;font-weight:700;">グラフ</div><div class="a" style="left:377.0px;top:251.3px;font-size:17px;line-height:22px;color:#595959;letter-spacing:-1.19px;transform:scaleX(0.923);transform-origin:0 0;font-weight:700;">タイトル</div><div class="a" style="left:328.8px;top:286.7px;width:5px;height:5px;background:#34497f;"></div><div class="a" style="left:336.0px;top:283.2px;font-size:9px;line-height:12px;color:#505050;letter-spacing:-0.63px;transform:scaleX(0.943);transform-origin:0 0;font-weight:500;font-family:'DejaVu Sans','Liberation Sans','Noto Sans CJK JP',sans-serif;">4月</div><div class="a" style="left:358px;top:286.7px;width:5px;height:5px;background:#5b9bd5;"></div><div class="a" style="left:365.2px;top:283.2px;font-size:9px;line-height:12px;color:#505050;letter-spacing:-0.63px;transform:scaleX(0.943);transform-origin:0 0;font-weight:500;font-family:'DejaVu Sans','Liberation Sans','Noto Sans CJK JP',sans-serif;">5月</div><div class="a" style="left:387.2px;top:286.7px;width:5px;height:5px;background:#2a7fd9;"></div><div class="a" style="left:394.2px;top:283.2px;font-size:9px;line-height:12px;color:#505050;letter-spacing:-0.63px;transform:scaleX(0.943);transform-origin:0 0;font-weight:500;font-family:'DejaVu Sans','Liberation Sans','Noto Sans CJK JP',sans-serif;">6月</div><div class="a" style="left:416px;top:286.7px;width:5px;height:5px;background:#8491ae;"></div><div class="a" style="left:423.2px;top:283.2px;font-size:9px;line-height:12px;color:#505050;letter-spacing:-0.63px;transform:scaleX(0.943);transform-origin:0 0;font-weight:500;font-family:'DejaVu Sans','Liberation Sans','Noto Sans CJK JP',sans-serif;">7月</div><div class="vl" style="left:180.5px;top:309px;height:159px;background:#dedede;"></div><div class="vl" style="left:237.5px;top:309px;height:159px;background:#dedede;"></div><div class="vl" style="left:294.5px;top:309px;height:159px;background:#dedede;"></div><div class="vl" style="left:351.5px;top:309px;height:159px;background:#dedede;"></div><div class="vl" style="left:408.5px;top:309px;height:159px;background:#dedede;"></div><div class="vl" style="left:465.5px;top:309px;height:159px;background:#dedede;"></div><div class="vl" style="left:522.5px;top:309px;height:159px;background:#dedede;"></div><div class="vl" style="left:579.5px;top:309px;height:159px;background:#dedede;"></div><div class="hl" style="left:181.0px;top:467.3px;width:399.0px;background:#d4d4d4;"></div><div class="a" style="left:193.5px;top:442.5px;width:32px;height:25.3px;background:#34497f;"></div><div class="a" style="left:199.8px;top:449.4px;font-size:8.7px;line-height:11px;color:#f4f4f4;">4018</div><div class="a" style="left:193.5px;top:417.0px;width:32px;height:26.1px;background:#5b9bd5;"></div><div class="a" style="left:199.8px;top:423.9px;font-size:8.7px;line-height:11px;color:#f4f4f4;">4060</div><div class="a" style="left:193.5px;top:379.0px;width:32px;height:38.5px;background:#2a7fd9;"></div><div class="a" style="left:199.8px;top:392.2px;font-size:8.7px;line-height:11px;color:#f4f4f4;">6030</div><div class="a" style="left:193.5px;top:348.6px;width:32px;height:30.9px;background:#8491ae;"></div><div class="a" style="left:199.8px;top:358.0px;font-size:8.7px;line-height:11px;color:#f4f4f4;">4830</div><div class="a" style="left:200.1px;top:472.9px;font-size:9px;line-height:12px;color:#505050;letter-spacing:0.78px;font-weight:500;">新橋</div><div class="a" style="left:250.5px;top:456.3px;width:32px;height:11.5px;background:#34497f;"></div><div class="a" style="left:256.8px;top:456.2px;font-size:8.7px;line-height:11px;color:#f4f4f4;">1830</div><div class="a" style="left:250.5px;top:444.7px;width:32px;height:12.1px;background:#5b9bd5;"></div><div class="a" style="left:256.8px;top:444.7px;font-size:8.7px;line-height:11px;color:#f4f4f4;">1844</div><div class="a" style="left:250.5px;top:421.6px;width:32px;height:23.5px;background:#2a7fd9;"></div><div class="a" style="left:256.8px;top:427.4px;font-size:8.7px;line-height:11px;color:#f4f4f4;">3660</div><div class="a" style="left:250.5px;top:400.0px;width:32px;height:22.2px;background:#8491ae;"></div><div class="a" style="left:256.8px;top:405.0px;font-size:8.7px;line-height:11px;color:#f4f4f4;">3444</div><div class="a" style="left:257.1px;top:472.9px;font-size:9px;line-height:12px;color:#505050;letter-spacing:0.78px;font-weight:500;">新宿</div><div class="a" style="left:307.5px;top:443.6px;width:32px;height:24.2px;background:#34497f;"></div><div class="a" style="left:313.8px;top:449.9px;font-size:8.7px;line-height:11px;color:#f4f4f4;">3844</div><div class="a" style="left:307.5px;top:420.3px;width:32px;height:23.9px;background:#5b9bd5;"></div><div class="a" style="left:313.8px;top:426.1px;font-size:8.7px;line-height:11px;color:#f4f4f4;">3710</div><div class="a" style="left:307.5px;top:390.5px;width:32px;height:30.3px;background:#2a7fd9;"></div><div class="a" style="left:313.8px;top:399.6px;font-size:8.7px;line-height:11px;color:#f4f4f4;">4730</div><div class="a" style="left:307.5px;top:365.1px;width:32px;height:25.9px;background:#8491ae;"></div><div class="a" style="left:313.8px;top:372.0px;font-size:8.7px;line-height:11px;color:#f4f4f4;">4031</div><div class="a" style="left:314.1px;top:472.9px;font-size:9px;line-height:12px;color:#505050;letter-spacing:0.78px;font-weight:500;">渋谷</div><div class="a" style="left:364.5px;top:444.2px;width:32px;height:23.6px;background:#34497f;"></div><div class="a" style="left:370.8px;top:450.2px;font-size:8.7px;line-height:11px;color:#f4f4f4;">3748</div><div class="a" style="left:364.5px;top:422.5px;width:32px;height:22.2px;background:#5b9bd5;"></div><div class="a" style="left:370.8px;top:427.6px;font-size:8.7px;line-height:11px;color:#f4f4f4;">3446</div><div class="a" style="left:364.5px;top:390.7px;width:32px;height:32.3px;background:#2a7fd9;"></div><div class="a" style="left:370.8px;top:400.8px;font-size:8.7px;line-height:11px;color:#f4f4f4;">5060</div><div class="a" style="left:364.5px;top:366.4px;width:32px;height:24.7px;background:#8491ae;"></div><div class="a" style="left:370.8px;top:372.8px;font-size:8.7px;line-height:11px;color:#f4f4f4;">3849</div><div class="a" style="left:371.1px;top:472.9px;font-size:9px;line-height:12px;color:#505050;letter-spacing:0.78px;font-weight:500;">池袋</div><div class="a" style="left:421.5px;top:442.6px;width:32px;height:25.2px;background:#34497f;"></div><div class="a" style="left:427.8px;top:449.4px;font-size:8.7px;line-height:11px;color:#f4f4f4;">4001</div><div class="a" style="left:421.5px;top:417.6px;width:32px;height:25.6px;background:#5b9bd5;"></div><div class="a" style="left:427.8px;top:424.3px;font-size:8.7px;line-height:11px;color:#f4f4f4;">3980</div><div class="a" style="left:421.5px;top:387.7px;width:32px;height:30.3px;background:#2a7fd9;"></div><div class="a" style="left:427.8px;top:396.8px;font-size:8.7px;line-height:11px;color:#f4f4f4;">4741</div><div class="a" style="left:421.5px;top:359.8px;width:32px;height:28.4px;background:#8491ae;"></div><div class="a" style="left:427.8px;top:368.0px;font-size:8.7px;line-height:11px;color:#f4f4f4;">4431</div><div class="a" style="left:423.4px;top:472.9px;font-size:9px;line-height:12px;color:#505050;letter-spacing:0.59px;font-weight:500;">秋葉原</div><div class="a" style="left:478.5px;top:433.4px;width:32px;height:34.4px;background:#34497f;"></div><div class="a" style="left:484.8px;top:444.8px;font-size:8.7px;line-height:11px;color:#f4f4f4;">5463</div><div class="a" style="left:478.5px;top:406.2px;width:32px;height:27.8px;background:#5b9bd5;"></div><div class="a" style="left:484.8px;top:414.0px;font-size:8.7px;line-height:11px;color:#f4f4f4;">4330</div><div class="a" style="left:478.5px;top:368.3px;width:32px;height:38.4px;background:#2a7fd9;"></div><div class="a" style="left:484.8px;top:381.4px;font-size:8.7px;line-height:11px;color:#f4f4f4;">6014</div><div class="a" style="left:478.5px;top:328.6px;width:32px;height:40.2px;background:#8491ae;"></div><div class="a" style="left:484.8px;top:342.6px;font-size:8.7px;line-height:11px;color:#f4f4f4;">6310</div><div class="a" style="left:485.1px;top:472.9px;font-size:9px;line-height:12px;color:#505050;letter-spacing:0.78px;font-weight:500;">横浜</div><div class="a" style="left:535.5px;top:455.6px;width:32px;height:12.2px;background:#34497f;"></div><div class="a" style="left:541.8px;top:455.9px;font-size:8.7px;line-height:11px;color:#f4f4f4;">1933</div><div class="a" style="left:535.5px;top:444.0px;width:32px;height:12.1px;background:#5b9bd5;"></div><div class="a" style="left:541.8px;top:444.0px;font-size:8.7px;line-height:11px;color:#f4f4f4;">1844</div><div class="a" style="left:535.5px;top:420.8px;width:32px;height:23.7px;background:#2a7fd9;"></div><div class="a" style="left:541.8px;top:426.6px;font-size:8.7px;line-height:11px;color:#f4f4f4;">3690</div><div class="a" style="left:535.5px;top:400.0px;width:32px;height:21.3px;background:#8491ae;"></div><div class="a" style="left:541.8px;top:404.6px;font-size:8.7px;line-height:11px;color:#f4f4f4;">3301</div><div class="a" style="left:542.1px;top:472.9px;font-size:9px;line-height:12px;color:#505050;letter-spacing:0.78px;font-weight:500;">川崎</div><div class="hd" style="left:167.0px;top:238.5px;"></div><div class="hd" style="left:379.0px;top:238.5px;"></div><div class="hd" style="left:591.0px;top:238.5px;"></div><div class="hd" style="left:167.0px;top:364.2px;"></div><div class="hd" style="left:591.0px;top:364.2px;"></div><div class="hd" style="left:167.0px;top:490.0px;"></div><div class="hd" style="left:379.0px;top:490.0px;"></div><div class="hd" style="left:591.0px;top:490.0px;"></div>
<svg style="left:0;top:0" width="600" height="506" viewBox="0 0 600 506"><defs><filter id="sh" x="-10%" y="-10%" width="130%" height="130%"><feGaussianBlur stdDeviation="1.5"/></filter></defs><g transform="translate(2.5,3)" filter="url(#sh)" opacity=".5"><path d="M291 126 C242.6 64 192.4 49 104 55 L100 54.8" stroke="#444" stroke-width="3" fill="none"/><path d="M86 54.4 L101.8 47.3 L101.8 61.5 Z" fill="#444"/></g><g opacity=".9"><path d="M291 126 C242.6 64 192.4 49 104 55 L100 54.8" stroke="#e5626e" stroke-width="3.1" fill="none"/><path d="M86 54.4 L101.8 47.3 L101.8 61.5 Z" fill="#e5626e"/></g></svg><div class="a" style="left:29.7px;top:43px;width:76.3px;height:29px;background:transparent;border:3.7px solid #b50f14;box-sizing:border-box;filter:drop-shadow(2.5px 3px 1.6px rgba(0,0,0,.5));"></div><div class="a" style="left:357px;top:19px;width:94px;height:30px;background:transparent;border:3.7px solid #b50f14;box-sizing:border-box;filter:drop-shadow(2.5px 3px 1.6px rgba(0,0,0,.5));"></div><div class="a" style="left:242px;top:124px;width:163px;height:43px;background:#f8cfd1;box-shadow:3px 3px 5px rgba(0,0,0,.45);"></div><div class="a" style="left:247.0px;top:132.8px;font-size:19px;line-height:25px;color:#000;letter-spacing:0.25px;font-weight:700;">配色ボタン</div><svg style="left:149px;top:155px" width="14" height="20" viewBox="0 0 14 20"><path d="M1.5 1.5 L1.5 14.5 L4.6 11.8 L7 17.3 L9.2 16.3 L6.9 11 L10.8 10.8 Z" fill="#fff" stroke="#333" stroke-width="1" stroke-linejoin="round"/></svg>
</body>
</html>
